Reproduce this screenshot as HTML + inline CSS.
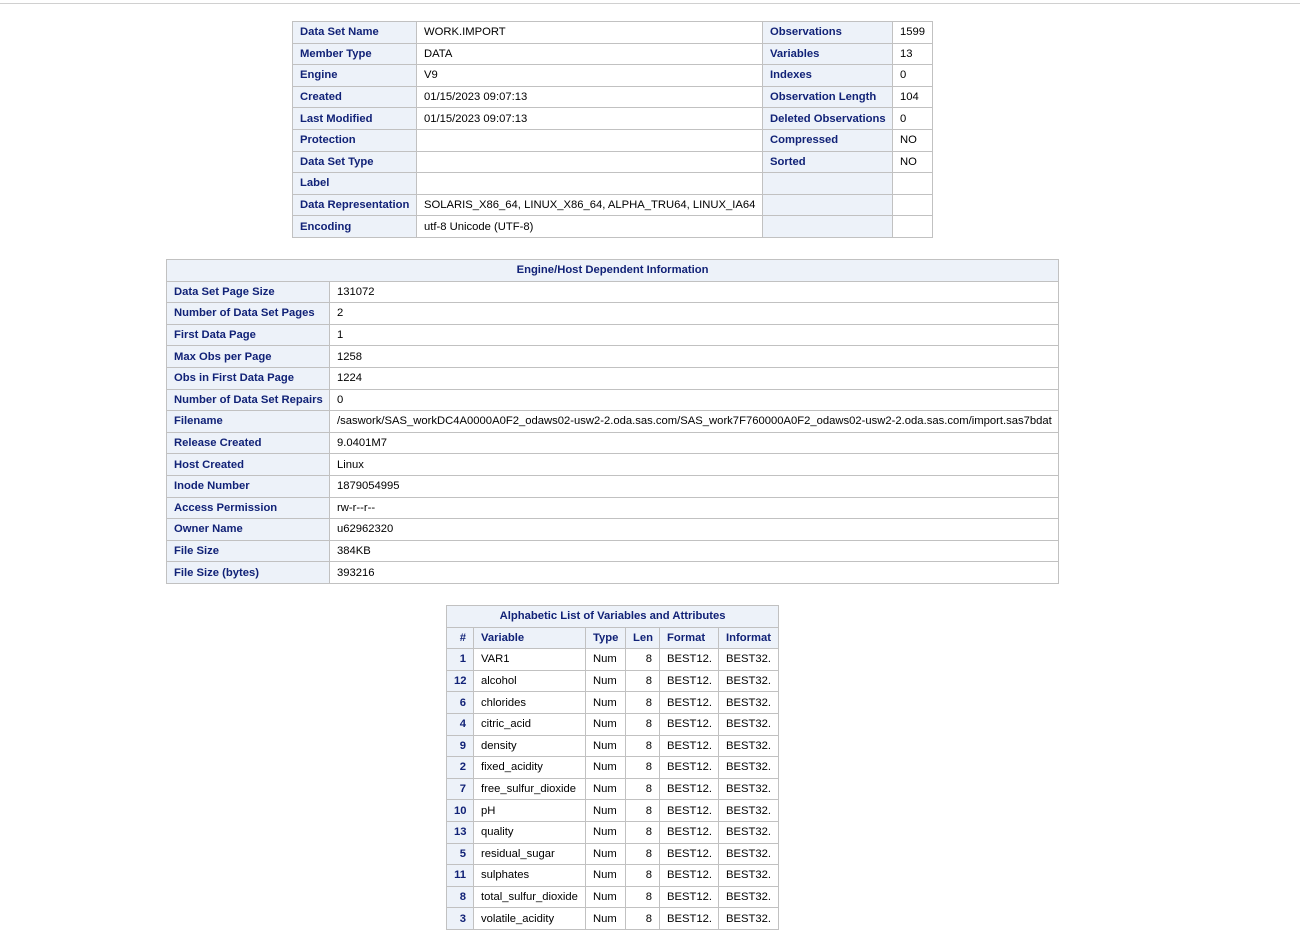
<!DOCTYPE html>
<html><head><meta charset="utf-8"><style>
html,body{margin:0;padding:0;background:#fff;}
body{width:1300px;height:933px;position:relative;overflow:hidden;font-family:"Liberation Sans",Arial,sans-serif;font-size:11.25px;color:#000;}
.top{position:absolute;left:0;top:3px;width:1300px;height:1px;background:#d0d0d0;}
table{position:absolute;border-collapse:collapse;table-layout:fixed;border:1px solid #c1c1c1;}
td,th{border:1px solid #c1c1c1;padding:0 7px;height:20.6px;white-space:nowrap;overflow:hidden;text-align:left;font-weight:normal;}
th{background:#edf2f9;color:#112277;font-weight:bold;}
th.c{text-align:center;}
td.r,th.r{text-align:right;}
</style></head><body>
<div class="top"></div>
<table style="left:292px;top:21px;width:640px">
<colgroup><col style="width:124px"><col style="width:346px"><col style="width:130px"><col style="width:40px"></colgroup>
<tr><th>Data Set Name</th><td>WORK.IMPORT</td><th>Observations</th><td>1599</td></tr>
<tr><th>Member Type</th><td>DATA</td><th>Variables</th><td>13</td></tr>
<tr><th>Engine</th><td>V9</td><th>Indexes</th><td>0</td></tr>
<tr><th>Created</th><td>01/15/2023 09:07:13</td><th>Observation Length</th><td>104</td></tr>
<tr><th>Last Modified</th><td>01/15/2023 09:07:13</td><th>Deleted Observations</th><td>0</td></tr>
<tr><th>Protection</th><td></td><th>Compressed</th><td>NO</td></tr>
<tr><th>Data Set Type</th><td></td><th>Sorted</th><td>NO</td></tr>
<tr><th>Label</th><td></td><th></th><td></td></tr>
<tr><th>Data Representation</th><td>SOLARIS_X86_64, LINUX_X86_64, ALPHA_TRU64, LINUX_IA64</td><th></th><td></td></tr>
<tr><th>Encoding</th><td>utf-8 Unicode (UTF-8)</td><th></th><td></td></tr>
</table>
<table style="left:166px;top:259px;width:892px">
<colgroup><col style="width:163px"><col style="width:729px"></colgroup>
<tr><th class="c" colspan="2">Engine/Host Dependent Information</th></tr>
<tr><th>Data Set Page Size</th><td>131072</td></tr>
<tr><th>Number of Data Set Pages</th><td>2</td></tr>
<tr><th>First Data Page</th><td>1</td></tr>
<tr><th>Max Obs per Page</th><td>1258</td></tr>
<tr><th>Obs in First Data Page</th><td>1224</td></tr>
<tr><th>Number of Data Set Repairs</th><td>0</td></tr>
<tr><th>Filename</th><td>/saswork/SAS_workDC4A0000A0F2_odaws02-usw2-2.oda.sas.com/SAS_work7F760000A0F2_odaws02-usw2-2.oda.sas.com/import.sas7bdat</td></tr>
<tr><th>Release Created</th><td>9.0401M7</td></tr>
<tr><th>Host Created</th><td>Linux</td></tr>
<tr><th>Inode Number</th><td>1879054995</td></tr>
<tr><th>Access Permission</th><td>rw-r--r--</td></tr>
<tr><th>Owner Name</th><td>u62962320</td></tr>
<tr><th>File Size</th><td>384KB</td></tr>
<tr><th>File Size (bytes)</th><td>393216</td></tr>
</table>
<table style="left:446px;top:605px;width:332px">
<colgroup><col style="width:27px"><col style="width:112px"><col style="width:40px"><col style="width:34px"><col style="width:59px"><col style="width:60px"></colgroup>
<tr><th class="c" colspan="6">Alphabetic List of Variables and Attributes</th></tr>
<tr><th class="r">#</th><th>Variable</th><th>Type</th><th class="r">Len</th><th>Format</th><th>Informat</th></tr>
<tr><th class="r">1</th><td>VAR1</td><td>Num</td><td class="r">8</td><td>BEST12.</td><td>BEST32.</td></tr>
<tr><th class="r">12</th><td>alcohol</td><td>Num</td><td class="r">8</td><td>BEST12.</td><td>BEST32.</td></tr>
<tr><th class="r">6</th><td>chlorides</td><td>Num</td><td class="r">8</td><td>BEST12.</td><td>BEST32.</td></tr>
<tr><th class="r">4</th><td>citric_acid</td><td>Num</td><td class="r">8</td><td>BEST12.</td><td>BEST32.</td></tr>
<tr><th class="r">9</th><td>density</td><td>Num</td><td class="r">8</td><td>BEST12.</td><td>BEST32.</td></tr>
<tr><th class="r">2</th><td>fixed_acidity</td><td>Num</td><td class="r">8</td><td>BEST12.</td><td>BEST32.</td></tr>
<tr><th class="r">7</th><td>free_sulfur_dioxide</td><td>Num</td><td class="r">8</td><td>BEST12.</td><td>BEST32.</td></tr>
<tr><th class="r">10</th><td>pH</td><td>Num</td><td class="r">8</td><td>BEST12.</td><td>BEST32.</td></tr>
<tr><th class="r">13</th><td>quality</td><td>Num</td><td class="r">8</td><td>BEST12.</td><td>BEST32.</td></tr>
<tr><th class="r">5</th><td>residual_sugar</td><td>Num</td><td class="r">8</td><td>BEST12.</td><td>BEST32.</td></tr>
<tr><th class="r">11</th><td>sulphates</td><td>Num</td><td class="r">8</td><td>BEST12.</td><td>BEST32.</td></tr>
<tr><th class="r">8</th><td>total_sulfur_dioxide</td><td>Num</td><td class="r">8</td><td>BEST12.</td><td>BEST32.</td></tr>
<tr><th class="r">3</th><td>volatile_acidity</td><td>Num</td><td class="r">8</td><td>BEST12.</td><td>BEST32.</td></tr>
</table>
</body></html>
